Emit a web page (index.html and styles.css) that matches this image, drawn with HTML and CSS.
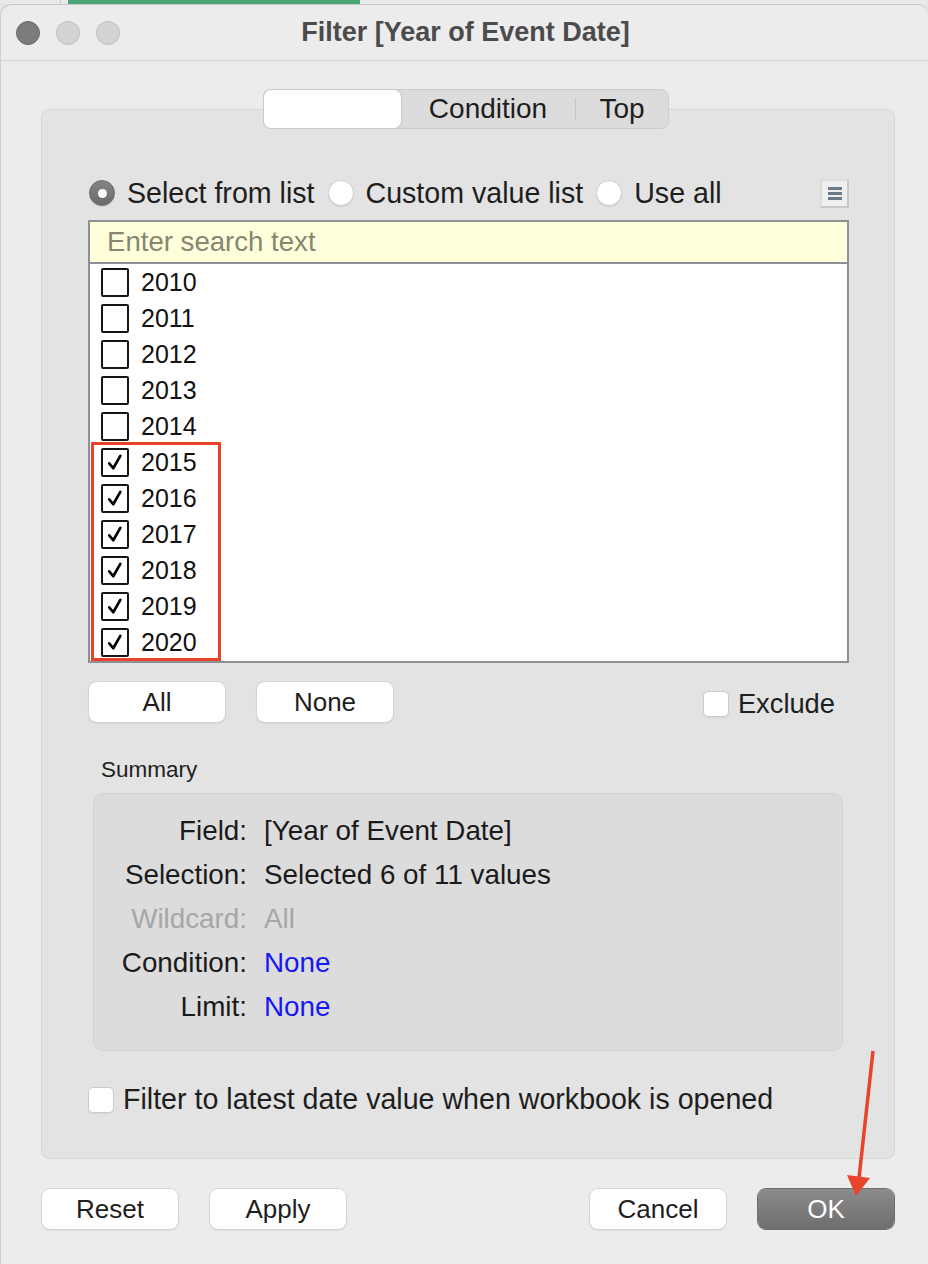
FILE: index.html
```html
<!DOCTYPE html>
<html>
<head>
<meta charset="utf-8">
<link rel="stylesheet" href="styles.css">
</head>
<body>
<div class="backdrop"><span class="bd-gap"></span><span class="bd-line"></span><span class="bd-green"></span></div>
<div class="window">
  <div class="titlebar">
    <div class="lights"><span class="light dark"></span><span class="light"></span><span class="light"></span></div>
    <div class="title">Filter [Year of Event Date]</div>
    <div></div>
  </div>
  <div class="content">
    <div class="tabs-wrap">
      <div class="tabs">
        <div class="tab tab-sel"></div>
        <div class="tab tab-cond">Condition</div>
        <span class="tab-div"></span>
        <div class="tab tab-top">Top</div>
      </div>
    </div>
    <div class="panel">
      <div class="radio-row">
        <span class="radio on"></span><span class="radio-label">Select from list</span>
        <span class="radio"></span><span class="radio-label">Custom value list</span>
        <span class="radio"></span><span class="radio-label">Use all</span>
        <span class="menu-btn"><i></i><i></i><i></i></span>
      </div>
      <div class="listbox">
        <div class="search">Enter search text</div>
        <div class="items">
          <div class="item"><span class="cb"></span>2010</div>
          <div class="item"><span class="cb"></span>2011</div>
          <div class="item"><span class="cb"></span>2012</div>
          <div class="item"><span class="cb"></span>2013</div>
          <div class="item"><span class="cb"></span>2014</div>
          <div class="item"><span class="cb"><svg viewBox="0 0 27 28"><path d="M7 15 L11.5 20.5 L19.5 6.5"/></svg></span>2015</div>
          <div class="item"><span class="cb"><svg viewBox="0 0 27 28"><path d="M7 15 L11.5 20.5 L19.5 6.5"/></svg></span>2016</div>
          <div class="item"><span class="cb"><svg viewBox="0 0 27 28"><path d="M7 15 L11.5 20.5 L19.5 6.5"/></svg></span>2017</div>
          <div class="item"><span class="cb"><svg viewBox="0 0 27 28"><path d="M7 15 L11.5 20.5 L19.5 6.5"/></svg></span>2018</div>
          <div class="item"><span class="cb"><svg viewBox="0 0 27 28"><path d="M7 15 L11.5 20.5 L19.5 6.5"/></svg></span>2019</div>
          <div class="item"><span class="cb"><svg viewBox="0 0 27 28"><path d="M7 15 L11.5 20.5 L19.5 6.5"/></svg></span>2020</div>
          <div class="highlight"></div>
        </div>
      </div>
      <div class="btn-row">
        <button class="btn">All</button>
        <button class="btn">None</button>
        <span class="spacer"></span>
        <span class="mac-cb"></span><span class="exclude">Exclude</span>
      </div>
      <div class="summary-label">Summary</div>
      <div class="summary">
        <div class="s-lab">Field:</div><div class="s-val">[Year of Event Date]</div>
        <div class="s-lab">Selection:</div><div class="s-val">Selected 6 of 11 values</div>
        <div class="s-lab dim">Wildcard:</div><div class="s-val dim">All</div>
        <div class="s-lab">Condition:</div><div class="s-val link">None</div>
        <div class="s-lab">Limit:</div><div class="s-val link">None</div>
      </div>
      <div class="latest-row">
        <span class="mac-cb"></span><span class="latest">Filter to latest date value when workbook is opened</span>
      </div>
    </div>
    <div class="footer">
      <button class="btn">Reset</button>
      <button class="btn">Apply</button>
      <span class="spacer"></span>
      <button class="btn">Cancel</button>
      <button class="btn btn-ok">OK</button>
    </div>
  </div>
  <svg class="arrow" width="60" height="160" viewBox="0 0 60 160">
    <line x1="29" y1="3" x2="15" y2="130" stroke="#e8442c" stroke-width="3.5"/>
    <polygon points="3,127 26,130 12,148" fill="#e8442c"/>
  </svg>
</div>
</body>
</html>
```
FILE: styles.css
```css
* { box-sizing: border-box; }
html, body { margin: 0; padding: 0; }
body {
  background: #e4e4e4;
  font-family: "Liberation Sans", Arial, sans-serif;
  color: #1e1e1e;
  width: 928px;
  height: 1264px;
  overflow: hidden;
}
.backdrop {
  height: 4px;
  display: flex;
  background: #e9e9e9;
}
.bd-gap { width: 60px; }
.bd-line { width: 1px; background: #c9c9c9; }
.bd-green { width: 292px; margin-left: 7px; background: #4ba677; }
.window {
  position: relative;
  background: #ececec;
  border-top: 1px solid #c6c6c6;
  border-left: 1px solid #cfcfcf;
  border-radius: 12px 12px 0 0;
  height: 1260px;
}
.titlebar {
  height: 56px;
  display: grid;
  grid-template-columns: 1fr auto 1fr;
  align-items: center;
  border-bottom: 1px solid #d2d2d2;
}
.lights {
  display: flex;
  gap: 16px;
  padding-left: 15px;
}
.light {
  width: 24px;
  height: 24px;
  border-radius: 50%;
  background: #d3d3d3;
  border: 1px solid #bdbdbd;
}
.light.dark { background: #7b7b7b; border-color: #6a6a6a; }
.title {
  font-weight: bold;
  font-size: 27px;
  color: #4b4b4b;
  padding-left: 2px;
}
.content {
  padding: 0 33px 0 40px;
}
.tabs-wrap {
  margin-top: 28px;
  height: 40px;
  display: flex;
  justify-content: center;
  position: relative;
  z-index: 1;
  padding-right: 4px;
}
.tabs {
  display: flex;
  align-items: center;
  width: 406px;
  height: 40px;
  background: #dcdcdc;
  border: 1px solid #cdcdcd;
  border-radius: 8px;
}
.tab {
  font-size: 28px;
  color: #1e1e1e;
  height: 100%;
  display: flex;
  align-items: center;
  justify-content: center;
}
.tab-sel {
  width: 137px;
  background: #ffffff;
  border-radius: 7px;
  box-shadow: 0 0 0 1px #c9c9c9;
}
.tab-cond { width: 174px; }
.tab-div { width: 1px; height: 22px; background: #c4c4c4; }
.tab-top { width: 92px; }
.panel {
  margin-top: -20px;
  background: #e3e3e3;
  border: 1px solid #d6d6d6;
  border-radius: 8px;
  padding: 67px 45px 42px 46px;
}
.radio-row {
  height: 32px;
  display: flex;
  align-items: center;
}
.radio {
  width: 26px;
  height: 26px;
  border-radius: 50%;
  background: #ffffff;
  border: 1px solid #cfcfcf;
  box-shadow: 0 1px 1px rgba(0,0,0,0.08);
  flex: none;
  margin-left: 13px;
  display: flex;
  align-items: center;
  justify-content: center;
}
.radio.on {
  margin-left: 1px;
  background: linear-gradient(#858585, #6b6b6b);
  border-color: #6a6a6a;
}
.radio.on::after {
  content: "";
  width: 9px;
  height: 9px;
  border-radius: 50%;
  background: #fff;
}
.radio-label {
  font-size: 28.6px;
  margin-left: 12px;
  white-space: nowrap;
}
.menu-btn {
  margin-left: auto;
  width: 29px;
  height: 29px;
  background: #efefef;
  border: 2px solid #c8c8c8;
  border-top-color: #dcdcdc;
  border-left-color: #dcdcdc;
  display: flex;
  flex-direction: column;
  align-items: center;
  justify-content: center;
  gap: 2px;
}
.menu-btn i {
  display: block;
  width: 14px;
  height: 3px;
  background: #6b7888;
}
.listbox {
  margin-top: 11px;
  border: 2px solid #8e9095;
  height: 443px;
  background: #ffffff;
}
.search {
  height: 42px;
  background: #ffffdb;
  border-bottom: 2px solid #8e9095;
  font-size: 27.6px;
  color: #868672;
  padding-left: 17px;
  line-height: 40px;
}
.items {
  position: relative;
}
.item {
  height: 36px;
  display: flex;
  align-items: center;
  font-size: 25px;
  color: #111;
}
.cb {
  width: 28px;
  height: 29px;
  border: 2px solid #161616;
  border-radius: 2px;
  margin-left: 11px;
  margin-right: 12px;
  background: #fff;
  flex: none;
  display: flex;
}
.cb svg {
  width: 100%;
  height: 100%;
}
.cb svg path {
  fill: none;
  stroke: #000;
  stroke-width: 3;
  stroke-linecap: round;
  stroke-linejoin: round;
}
.highlight {
  position: absolute;
  left: 1px;
  top: 178px;
  width: 130px;
  height: 219px;
  border: 3px solid #e8442c;
}
.btn-row {
  margin-top: 19px;
  display: flex;
  align-items: center;
  gap: 32px;
  padding-left: 1px;
  padding-right: 14px;
}
.btn {
  font-family: "Liberation Sans", Arial, sans-serif;
  width: 136px;
  height: 40px;
  background: #ffffff;
  border: none;
  border-radius: 8px;
  box-shadow: 0 0 0 1px #d4d4d4, 0 1px 2px rgba(0,0,0,0.18);
  font-size: 26px;
  color: #1e1e1e;
  padding: 0;
}
.spacer { flex: 1; }
.mac-cb {
  width: 26px;
  height: 26px;
  background: #ffffff;
  border: 1px solid #cbcbcb;
  border-radius: 5px;
  box-shadow: 0 1px 1px rgba(0,0,0,0.06);
  flex: none;
}
.btn-row .mac-cb { margin-right: -23px; margin-top: 4px; }
.exclude { font-size: 27.3px; margin-top: 4px; }
.summary-label {
  margin-top: 35px;
  padding-left: 13px;
  font-size: 22.5px;
  height: 26px;
  line-height: 26px;
}
.summary {
  margin: 10px 6px 0 5px;
  background: #dcdcdc;
  border: 1px solid #d2d2d2;
  border-radius: 10px;
  padding: 15px 0 21px 0;
  display: grid;
  grid-template-columns: 153px 1fr;
  column-gap: 17px;
  grid-auto-rows: 44px;
  align-items: center;
  font-size: 27.8px;
}
.s-lab { text-align: right; color: #1a1a1a; }
.s-val { color: #1a1a1a; white-space: nowrap; }
.dim { color: #a6a6a6; }
.link { color: #1717f5; }
.latest-row {
  margin-top: 32px;
  display: flex;
  align-items: center;
  gap: 9px;
}
.latest { font-size: 28.6px; color: #1e1e1e; white-space: nowrap; }
.footer {
  margin-top: 30px;
  display: flex;
  align-items: center;
  gap: 32px;
  padding-left: 1px;
  padding-right: 1px;
}
.btn-ok {
  background: linear-gradient(#8b8b8b, #6e6e6e);
  color: #ffffff;
  box-shadow: 0 0 0 1px #6e6e6e;
}
.arrow {
  position: absolute;
  left: 843px;
  top: 1043px;
}
```
